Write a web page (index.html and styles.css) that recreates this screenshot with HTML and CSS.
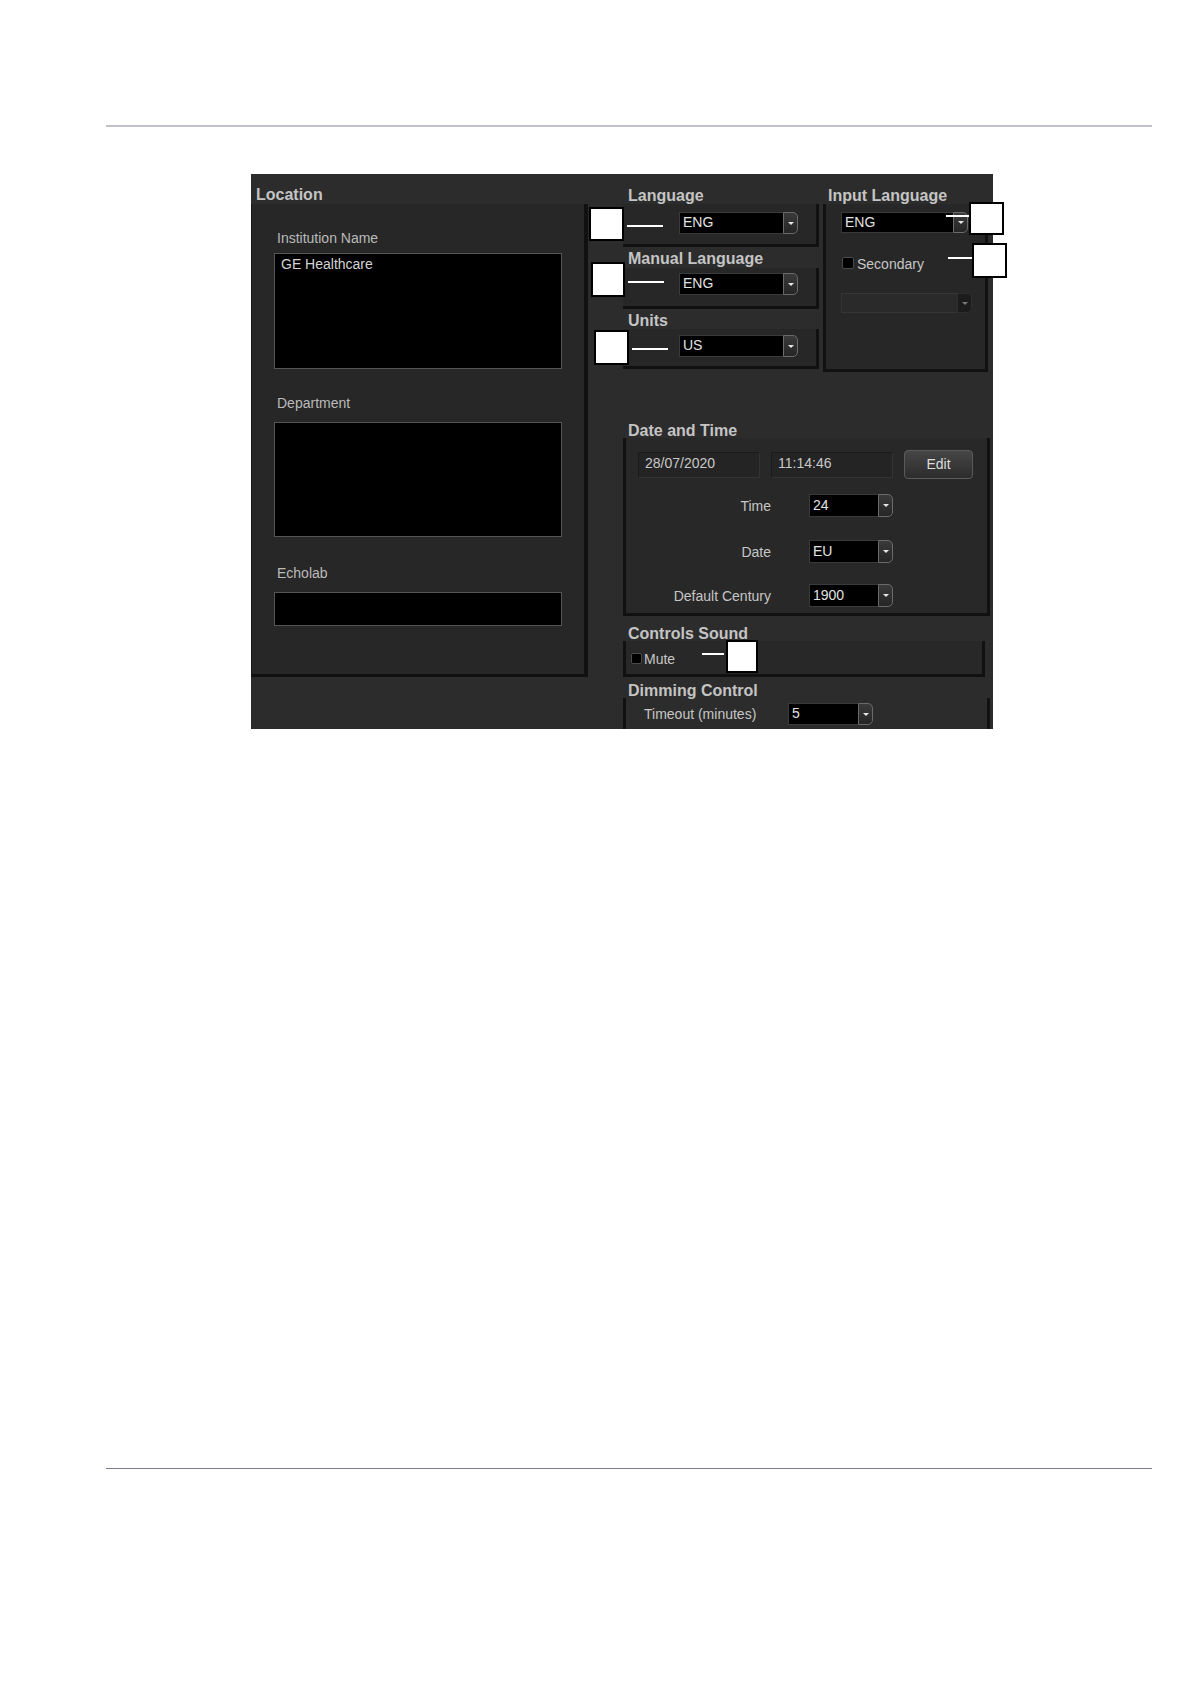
FILE: index.html
```html
<!DOCTYPE html>
<html>
<head>
<meta charset="utf-8">
<title>System Setup - Location</title>
<link rel="stylesheet" href="styles.css">
</head>
<body>
<div class="rule rule-top"></div>
<div class="panel">
  <section class="loc">
    <h2 class="hd hd-loc">Location</h2>
    <div class="loc-box">
      <div class="lbl lbl-inst">Institution Name</div>
      <div class="tbox tbox-inst">GE Healthcare</div>
      <div class="lbl lbl-dept">Department</div>
      <div class="tbox tbox-dept"></div>
      <div class="lbl lbl-echo">Echolab</div>
      <div class="tbox tbox-echo"></div>
    </div>
  </section>
  <section class="right">
    <div class="top">
      <div class="col-a">
        <h2 class="hd hd-lang">Language</h2>
        <div class="gbox gbox-1">
          <div class="sel sel-a"><span class="val">ENG</span><span class="btn"></span></div>
        </div>
        <h2 class="hd hd-man">Manual Language</h2>
        <div class="gbox gbox-2">
          <div class="sel sel-a"><span class="val">ENG</span><span class="btn"></span></div>
        </div>
        <h2 class="hd hd-units">Units</h2>
        <div class="gbox gbox-3">
          <div class="sel sel-a"><span class="val">US</span><span class="btn"></span></div>
        </div>
      </div>
      <div class="col-b">
        <h2 class="hd hd-input">Input Language</h2>
        <div class="ibox">
          <div class="sel sel-in"><span class="val">ENG</span><span class="btn"></span></div>
          <div class="chk-row"><span class="chk"></span><span class="chk-txt">Secondary</span></div>
          <div class="sel sel-dis"><span class="val"></span><span class="btn"></span></div>
        </div>
      </div>
    </div>
    <h2 class="hd hd-date">Date and Time</h2>
    <div class="dbox">
      <div class="drow">
        <div class="fld">28/07/2020</div>
        <div class="fld">11:14:46</div>
        <div class="edit">Edit</div>
      </div>
      <div class="frow frow-time"><span class="flbl">Time</span><div class="sel sel-d"><span class="val">24</span><span class="btn"></span></div></div>
      <div class="frow frow-date"><span class="flbl">Date</span><div class="sel sel-d"><span class="val">EU</span><span class="btn"></span></div></div>
      <div class="frow frow-cent"><span class="flbl">Default Century</span><div class="sel sel-d"><span class="val">1900</span><span class="btn"></span></div></div>
    </div>
    <h2 class="hd hd-snd">Controls Sound</h2>
    <div class="sbox">
      <div class="mute-row"><span class="chk chk-mute"></span><span class="chk-txt">Mute</span></div>
    </div>
    <h2 class="hd hd-dim">Dimming Control</h2>
    <div class="dimbox">
      <div class="trow"><span class="tlbl">Timeout (minutes)</span><div class="sel sel-t"><span class="val">5</span><span class="btn"></span></div></div>
    </div>
  </section>

  <div class="callout c1"></div><div class="lead l1"></div>
  <div class="callout c2"></div><div class="lead l2"></div>
  <div class="callout c3"></div><div class="lead l3"></div>
  <div class="lead l4"></div><div class="callout c4"></div>
  <div class="lead l5"></div><div class="callout c5"></div>
  <div class="lead l6"></div><div class="callout c6"></div>
</div>
<div class="rule rule-bottom"></div>
</body>
</html>
```

FILE: styles.css
```css
* { box-sizing: border-box; }
html, body { margin: 0; padding: 0; background: #ffffff; }
body { font-family: "Liberation Sans", Arial, sans-serif; width: 1190px; height: 1684px; }

.rule { margin-left: 106px; width: 1046px; }
.rule-top { margin-top: 125px; height: 2px; background: #c0c0cd; }
.rule-bottom { margin-top: 739px; height: 1px; background: #7c7c8e; }

.panel {
  position: relative;
  margin: 47px 0 0 251px;
  width: 742px;
  height: 555px;
  background: #2c2c2c;
  display: flex;
  color: #c4c4c4;
}

.hd {
  margin: 0;
  font-size: 16px;
  font-weight: bold;
  line-height: 18px;
  color: #c4c4c4;
  white-space: nowrap;
}

/* Location column */
.loc { width: 337px; display: flex; flex-direction: column; }
.hd-loc { height: 30px; padding: 12px 0 0 5px; }
.loc-box {
  height: 473px;
  background: #272727;
  border-left: 1px solid #151515;
  border-right: 4px solid #111;
  border-bottom: 3px solid #111;
  padding: 25px 0 0 22px;
}
.lbl { font-size: 14px; line-height: 16px; height: 16px; padding: 1px 0 0 3px; color: #bababa; }
.lbl-dept { margin-top: 25px; }
.lbl-echo { margin-top: 27px; }
.tbox {
  width: 288px;
  background: #000;
  border: 1px solid #555;
  font-size: 14px;
  line-height: 16px;
  padding: 2px 6px;
  color: #d4d4d4;
}
.tbox-inst { margin-top: 8px; height: 116px; }
.tbox-dept { margin-top: 12px; height: 115px; }
.tbox-echo { margin-top: 12px; height: 34px; }

/* right column */
.right { width: 405px; display: flex; flex-direction: column; }
.top { display: flex; height: 198px; }
.col-a { width: 235px; }
.col-b { width: 170px; }

.hd-lang { height: 30px; padding: 13px 0 0 40px; }
.hd-man { height: 21px; padding: 3px 0 0 40px; }
.hd-units { height: 20px; padding: 3px 0 0 40px; }
.gbox {
  margin-left: 35px;
  width: 196px;
  background: #272727;
  border-right: 3px solid #111;
  border-bottom: 3px solid #111;
  padding-left: 56px;
}
.gbox-1 { height: 43px; padding-top: 8px; }
.gbox-2 { height: 41px; padding-top: 5px; }
.gbox-3 { height: 40px; padding-top: 6px; }

.hd-input { height: 30px; padding: 13px 0 0 5px; }
.ibox {
  width: 165px;
  height: 168px;
  background: #272727;
  border: 3px solid #111;
  border-top: 0;
  padding: 8px 0 0 15px;
}

/* select widget */
.sel { display: flex; height: 22px; }
.sel .val {
  flex: 1;
  background: #000;
  border: 1px solid #3a3a3a;
  border-right: 0;
  color: #e2e2e2;
  font-size: 14px;
  line-height: 19px;
  padding-left: 3px;
}
.sel .btn {
  width: 15px;
  background: linear-gradient(#3a3a3a, #262626);
  border: 1px solid #6a6a6a;
  border-radius: 0 5px 5px 0;
  display: flex;
  align-items: center;
  justify-content: center;
}
.sel .btn::after {
  content: "";
  border-left: 3px solid transparent;
  border-right: 3px solid transparent;
  border-top: 3px solid #e8e8e8;
}
.sel-a { width: 119px; }
.sel-in { width: 127px; height: 21px; }
.sel-dis { width: 131px; height: 20px; margin-top: 22px; }
.sel-dis .val { background: #2a2a2a; border-color: #353535; }
.sel-dis .btn { background: #1c1c1c; border-color: #2e2e2e; }
.sel-dis .btn::after { border-top-color: #777; }

.chk-row, .mute-row { display: flex; align-items: center; height: 16px; }
.chk-row { margin-top: 22px; padding-left: 1px; }
.chk {
  width: 12px; height: 12px;
  background: #000;
  border: 1px solid #4a4a4a;
  border-radius: 2px;
}
.chk-txt { font-size: 14px; line-height: 16px; margin-left: 3px; padding-top: 1px; color: #c6c6c6; }

/* date and time */
.hd-date { margin-top: 47px; height: 19px; padding: 3px 0 0 40px; }
.dbox {
  margin-left: 35px;
  width: 367px;
  height: 178px;
  background: #282828;
  border: 3px solid #111;
  border-top: 0;
  padding: 12px 0 0 12px;
}
.drow { display: flex; align-items: center; gap: 11px; height: 29px; }
.fld {
  width: 122px;
  height: 26px;
  background: #242424;
  border: 1px solid #1a1a1a;
  border-right-color: #333;
  border-bottom-color: #333;
  font-size: 14px;
  line-height: 16px;
  padding: 2px 0 0 6px;
  color: #c8c8c8;
}
.edit {
  width: 69px;
  height: 29px;
  background: linear-gradient(#464646, #2c2c2c);
  border: 1px solid #5a5a5a;
  border-radius: 4px;
  text-align: center;
  font-size: 14px;
  line-height: 27px;
  color: #dcdcdc;
}
.frow { display: flex; align-items: center; gap: 38px; height: 23px; }
.frow-time { margin-top: 15px; }
.frow-date { margin-top: 23px; }
.frow-cent { margin-top: 21px; }
.flbl { width: 133px; text-align: right; font-size: 14px; line-height: 16px; padding-top: 1px; color: #c6c6c6; }
.sel-d { width: 84px; height: 23px; }
.sel-d .val { line-height: 20px; }

/* sound */
.hd-snd { height: 25px; padding: 9px 0 0 40px; }
.sbox {
  margin-left: 35px;
  width: 362px;
  height: 36px;
  background: #282828;
  border: 3px solid #111;
  border-top: 0;
  padding: 9px 0 0 5px;
}
.chk-mute { width: 11px; height: 11px; }
.mute-row .chk-txt { margin-left: 2px; }

/* dimming */
.hd-dim { height: 21px; padding: 5px 0 0 40px; }
.dimbox {
  margin-left: 35px;
  width: 367px;
  height: 31px;
  border-left: 3px solid #111;
  border-right: 3px solid #111;
  padding: 5px 0 0 18px;
}
.trow { display: flex; align-items: center; height: 22px; }
.tlbl { width: 144px; font-size: 14px; line-height: 16px; color: #c6c6c6; }
.sel-t { width: 85px; }

/* annotation callouts */
.callout { position: absolute; background: #fff; border: 2px solid #000; }
.lead { position: absolute; height: 2px; background: #fff; }
.c1 { left: 338px; top: 33px; width: 35px; height: 34px; }
.l1 { left: 376px; top: 51px; width: 36px; }
.c2 { left: 340px; top: 88px; width: 34px; height: 35px; }
.l2 { left: 377px; top: 107px; width: 36px; }
.c3 { left: 343px; top: 156px; width: 35px; height: 35px; }
.l3 { left: 381px; top: 174px; width: 36px; }
.c4 { left: 718px; top: 28px; width: 35px; height: 33px; }
.l4 { left: 695px; top: 41px; width: 23px; }
.c5 { left: 721px; top: 69px; width: 35px; height: 35px; }
.l5 { left: 697px; top: 83px; width: 24px; }
.c6 { left: 475px; top: 466px; width: 32px; height: 33px; }
.l6 { left: 451px; top: 479px; width: 22px; }
```
